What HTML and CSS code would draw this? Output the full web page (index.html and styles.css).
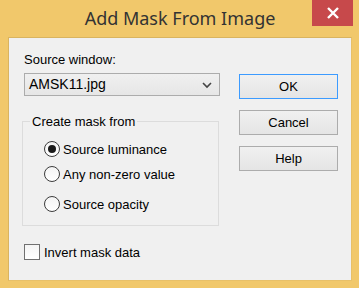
FILE: index.html
```html
<!DOCTYPE html>
<html>
<head>
<meta charset="utf-8">
<link rel="stylesheet" href="styles.css">
</head>
<body>
<div class="window">
  <div class="titlebar">
    <span class="title">Add Mask From Image</span>
    <div class="close">
      <svg width="14" height="14" viewBox="0 0 14 14"><path d="M2 2 L12 12 M12 2 L2 12" stroke="#fff" stroke-width="2.4" fill="none"/></svg>
    </div>
  </div>
  <div class="client">
    <div class="left">
      <div class="label">Source window:</div>
      <div class="combo">
        <span>AMSK11.jpg</span>
        <svg class="chev" width="10" height="7" viewBox="0 0 10 7"><path d="M1 1 L5 5 L9 1" stroke="#444" stroke-width="1.6" fill="none"/></svg>
      </div>
      <div class="group">
        <span class="group-label">Create mask from</span>
        <div class="radio r1"><span class="dot checked"></span><span>Source luminance</span></div>
        <div class="radio r2"><span class="dot"></span><span>Any non-zero value</span></div>
        <div class="radio r3"><span class="dot"></span><span>Source opacity</span></div>
      </div>
      <div class="check"><span class="box"></span><span>Invert mask data</span></div>
    </div>
    <div class="right">
      <div class="btn default">OK</div>
      <div class="btn">Cancel</div>
      <div class="btn">Help</div>
    </div>
  </div>
</div>
</body>
</html>
```
FILE: styles.css
```css
html, body { margin: 0; padding: 0; }
body { width: 359px; height: 288px; overflow: hidden; font-family: "Liberation Sans", Arial, sans-serif; font-size: 13px; color: #000; }
.window { width: 359px; height: 288px; box-sizing: border-box; background: #f1c86b; padding: 0 7px 7px 8px; display: flex; flex-direction: column; position: relative; }
.titlebar { height: 37px; display: flex; justify-content: center; align-items: flex-start; }
.title { font-family: "Noto Sans", "Open Sans", sans-serif; font-size: 18px; color: #333; margin-top: 6px; line-height: 24px; }
.close { position: absolute; top: 0; left: 312px; width: 41px; height: 26px; background: #c7494b; display: flex; align-items: center; justify-content: center; }
.client { flex: 1; background: #f0f0f0; border: 1px solid #d9b460; border-right-color: #e8c068; border-bottom-color: #e8c068; box-sizing: border-box; display: flex; line-height: 15px; }
.left { width: 222px; display: flex; flex-direction: column; padding-left: 15px; box-sizing: border-box; }
.label { margin-top: 14px; }
.combo { margin-top: 6px; width: 196px; height: 23px; box-sizing: border-box; border: 1px solid #acacac; background: linear-gradient(#f0f0f0, #e6e6e6); display: flex; align-items: center; justify-content: space-between; padding: 0 7px 0 4px; font-size: 14px; }
.chev { margin-top: 1px; }
.group { position: relative; margin-top: 25px; margin-left: -2px; width: 197px; height: 105px; box-sizing: border-box; border: 1px solid #dcdcdc; display: flex; flex-direction: column; padding-left: 21px; }
.group-label { position: absolute; top: -8px; left: 7px; padding: 0 2px; background: #f0f0f0; }
.radio { display: flex; align-items: center; gap: 3px; height: 16px; }
.r1 { margin-top: 19px; }
.r2 { margin-top: 9px; }
.r3 { margin-top: 14px; }
.dot { width: 16px; height: 16px; box-sizing: border-box; border: 1px solid #3c3c3c; border-radius: 50%; background: linear-gradient(#f4f4f4, #ffffff); display: flex; align-items: center; justify-content: center; }
.dot.checked::after { content: ""; width: 8px; height: 8px; border-radius: 50%; background: #1a1a1a; }
.check { display: flex; align-items: center; gap: 4px; margin-top: 18px; height: 16px; }
.box { width: 16px; height: 16px; box-sizing: border-box; border: 1px solid #707070; background: linear-gradient(#f4f4f4, #fff); }
.right { display: flex; flex-direction: column; gap: 11px; padding-top: 36px; margin-left: 8px; }
.btn { width: 99px; height: 25px; box-sizing: border-box; border: 1px solid #acacac; background: linear-gradient(#f0f0f0, #e5e5e5); display: flex; align-items: center; justify-content: center; }
.btn.default { border-color: #3c9bff; }
```
